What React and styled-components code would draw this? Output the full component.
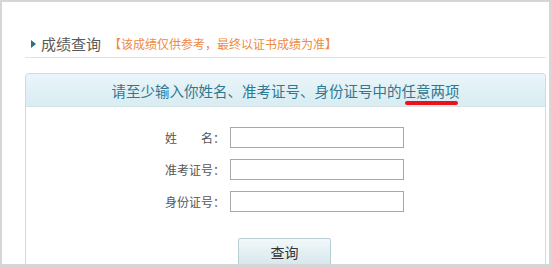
import React from "react";
import styled, { createGlobalStyle } from "styled-components";

const Global = createGlobalStyle`
  html, body { margin: 0; padding: 0; background: #fff; }
  body { font-family: "Noto Sans CJK SC", "Noto Sans", "Liberation Sans", sans-serif; }
  * { box-sizing: border-box; }
`;

const Frame = styled.div`
  width: 552px;
  height: 268px;
  border: 2px solid #d6d6d6;
  border-right-width: 3px;
  border-bottom-width: 4px;
  background: #fff;
  padding: 0 3px 0 23px;
  display: flex;
  flex-direction: column;
  overflow: hidden;
`;

const TitleBar = styled.div`
  margin-top: 31px;
  height: 25px;
  display: flex;
  align-items: center;
  padding-left: 6px;
  padding-bottom: 2px;
  border-bottom: 1px solid #e2e2e2;
`;

const Arrow = styled.span`
  width: 0;
  height: 0;
  border-top: 4.5px solid transparent;
  border-bottom: 4.5px solid transparent;
  border-left: 5.5px solid #2b6f80;
  margin-right: 5px;
  margin-top: -1px;
`;

const Title = styled.span`
  font-size: 15px;
  color: #595959;
  line-height: 22px;
`;

const Note = styled.span`
  font-size: 12px;
  color: #ee8a44;
  margin-left: 8px;
  line-height: 22px;
`;

const Panel = styled.div`
  margin-top: 15px;
  flex: 1;
  border: 1px solid #d3dadd;
  border-bottom: none;
  border-radius: 4px 4px 0 0;
  display: flex;
  flex-direction: column;
  overflow: hidden;
`;

const PanelHead = styled.div`
  height: 33px;
  background: linear-gradient(#eaf5f9, #d8ecf2);
  border-bottom: 1px solid #d6e2e6;
  text-align: center;
  font-size: 14.5px;
  line-height: 34px;
  color: #2e7892;
`;

const Marked = styled.span`
  position: relative;
  &::after {
    content: "";
    position: absolute;
    left: 3px;
    right: 2px;
    bottom: -4px;
    height: 4px;
    border-radius: 3px;
    background: #e8141a;
  }
`;

const Form = styled.div`
  display: grid;
  grid-template-columns: 60px 174px;
  column-gap: 5px;
  row-gap: 11px;
  justify-content: center;
  padding-top: 20px;
  margin-left: -2px;
`;

const Label = styled.label`
  font-size: 12px;
  color: #555;
  text-align: right;
  line-height: 21px;
  white-space: nowrap;
`;

const Input = styled.input`
  width: 174px;
  height: 21px;
  border: 1px solid #a8a8a8;
  background: #fff;
  outline: none;
  padding: 0 3px;
`;

const Actions = styled.div`
  display: flex;
  justify-content: center;
  padding-top: 26px;
  margin-left: -2px;
`;

const Button = styled.button`
  width: 93px;
  height: 30px;
  border: 1px solid #b9cdd5;
  border-radius: 2px;
  background: linear-gradient(#f2f8fa, #d4e6ec);
  font-family: inherit;
  font-size: 14px;
  color: #333;
  padding: 0 0 2px;
`;

export default function App() {
  return (
    <>
      <Global />
      <Frame>
        <TitleBar>
          <Arrow />
          <Title>成绩查询</Title>
          <Note>【该成绩仅供参考，最终以证书成绩为准】</Note>
        </TitleBar>
        <Panel>
          <PanelHead>
            请至少输入你姓名、准考证号、身份证号中的<Marked>任意两项</Marked>
          </PanelHead>
          <Form>
            <Label>姓　　名：</Label>
            <Input type="text" />
            <Label>准考证号：</Label>
            <Input type="text" />
            <Label>身份证号：</Label>
            <Input type="text" />
          </Form>
          <Actions>
            <Button>查询</Button>
          </Actions>
        </Panel>
      </Frame>
    </>
  );
}
